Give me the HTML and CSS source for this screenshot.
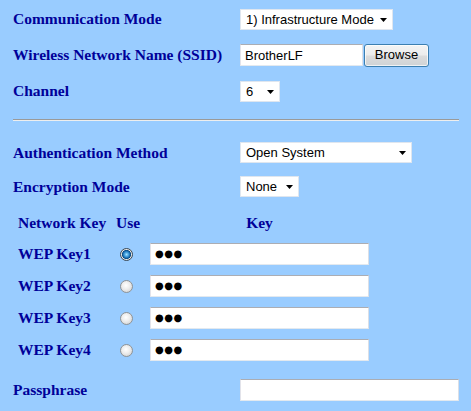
FILE: index.html
```html
<!DOCTYPE html>
<html>
<head>
<meta charset="utf-8">
<title>Wireless settings</title>
<link rel="stylesheet" href="styles.css">
</head>
<body>
<div class="page">
  <div class="rows top">
    <div class="lbl">Communication Mode</div>
    <div class="field">
      <div class="select w-mode"><span>1) Infrastructure Mode</span><svg class="arrow" width="7" height="4" viewBox="0 0 7 4"><path d="M0 0H7L3.5 4Z"/></svg></div>
    </div>
    <div class="lbl">Wireless Network Name (SSID)</div>
    <div class="field">
      <input class="text w-ssid" type="text" value="BrotherLF">
      <button class="btn" type="button">Browse</button>
    </div>
    <div class="lbl">Channel</div>
    <div class="field">
      <div class="select w-chan"><span>6</span><svg class="arrow" width="7" height="4" viewBox="0 0 7 4"><path d="M0 0H7L3.5 4Z"/></svg></div>
    </div>
  </div>

  <div class="rule"></div>

  <div class="rows sec">
    <div class="lbl">Authentication Method</div>
    <div class="field">
      <div class="select w-auth"><span>Open System</span><svg class="arrow" width="7" height="4" viewBox="0 0 7 4"><path d="M0 0H7L3.5 4Z"/></svg></div>
    </div>
    <div class="lbl">Encryption Mode</div>
    <div class="field">
      <div class="select w-enc"><span>None</span><svg class="arrow" width="7" height="4" viewBox="0 0 7 4"><path d="M0 0H7L3.5 4Z"/></svg></div>
    </div>
  </div>

  <div class="keys">
    <div class="kh">Network Key</div>
    <div class="kh">Use</div>
    <div class="kh center">Key</div>

    <div class="lbl">WEP Key1</div>
    <div class="use"><span class="radio on"></span></div>
    <div class="pw"><span class="dots">●●●</span></div>

    <div class="lbl">WEP Key2</div>
    <div class="use"><span class="radio"></span></div>
    <div class="pw"><span class="dots">●●●</span></div>

    <div class="lbl">WEP Key3</div>
    <div class="use"><span class="radio"></span></div>
    <div class="pw"><span class="dots">●●●</span></div>

    <div class="lbl">WEP Key4</div>
    <div class="use"><span class="radio"></span></div>
    <div class="pw"><span class="dots">●●●</span></div>
  </div>

  <div class="rows pass">
    <div class="lbl">Passphrase</div>
    <div class="field"><input class="text w-pass" type="text" value=""></div>
  </div>
</div>
</body>
</html>
```

FILE: styles.css
```css
* { box-sizing: border-box; }

body {
  margin: 0;
  background: #99ccff;
  font: bold 15.5px "Liberation Serif", "Times New Roman", serif;
  color: #000099;
}

.page {
  padding: 8px 12px 10px 13px;
}

.rows {
  display: grid;
  grid-template-columns: 227px 1fr;
  grid-auto-rows: 22px;
  row-gap: 14px;
  align-items: center;
}

.sec {
  grid-auto-rows: 21px;
  row-gap: 13px;
}

.lbl {
  white-space: nowrap;
  line-height: 18px;
}

.field {
  display: flex;
  align-items: center;
  height: 100%;
}

.select {
  position: relative;
  display: flex;
  align-items: center;
  height: 21px;
  background: #ffffff;
  border: 1px solid #dfe6ef;
  font: 13px "Liberation Sans", Arial, sans-serif;
  color: #000000;
  padding-left: 5px;
}

.select .arrow {
  position: absolute;
  right: 5px;
  top: 8px;
  fill: #000;
}

.w-mode { width: 153px; }
.w-chan { width: 40px; }
.w-auth { width: 172px; }
.w-enc { width: 59px; }

.text {
  height: 22px;
  background: #fff;
  border: 1px solid;
  border-color: #abadb3 #dbdfe6 #e3e9ef #e2e3ea;
  font: 13px "Liberation Sans", Arial, sans-serif;
  color: #000;
  padding: 0 0 0 4px;
  margin: 0;
  outline: none;
}

.w-ssid { width: 123px; }
.w-pass { width: 219px; }

.btn {
  width: 65px;
  height: 23px;
  margin: 0 0 0 1px;
  padding: 0 0 1px;
  font: 13px "Liberation Sans", Arial, sans-serif;
  color: #000;
  border: 1px solid #3c7fb1;
  border-radius: 3px;
  background: linear-gradient(#f4f4f4 0%, #ececec 48%, #dcdcdc 52%, #cfd3d6 100%);
  box-shadow: inset 0 0 0 1px rgba(255,255,255,0.7);
}

.rule {
  margin: 17px 0 21px;
  height: 2px;
  border-top: 1px solid #9a9a9a;
  border-bottom: 1px solid #eeeeee;
}

.keys {
  display: grid;
  grid-template-columns: 98px 34px 219px;
  grid-template-rows: 20px;
  grid-auto-rows: 22px;
  row-gap: 10px;
  align-items: center;
  margin: 16px 0 0 5px;
}

.kh {
  line-height: 18px;
  white-space: nowrap;
}

.center { text-align: center; }

.use {
  display: flex;
  align-items: center;
  padding-left: 4px;
}

.radio {
  display: block;
  width: 13px;
  height: 13px;
  border-radius: 50%;
  border: 1px solid #8f9396;
  background: radial-gradient(circle at 45% 40%, #ffffff 0%, #ececec 45%, #c9c9c9 100%);
}

.radio.on {
  border-color: #3d4a55;
  background: radial-gradient(circle at 50% 50%, #9fe2ff 0%, #2b8ad0 35%, #0d4a80 55%, #e8e8e8 62%, #cfcfcf 100%);
}

.pw {
  height: 22px;
  background: #fff;
  border: 1px solid;
  border-color: #abadb3 #dbdfe6 #e3e9ef #e2e3ea;
  display: flex;
  align-items: center;
  padding-left: 4px;
}

.dots {
  font: 10px "DejaVu Sans", sans-serif;
  letter-spacing: 0.5px;
  color: #000;
  line-height: 1;
}

.pass {
  margin-top: 18px;
}
```
